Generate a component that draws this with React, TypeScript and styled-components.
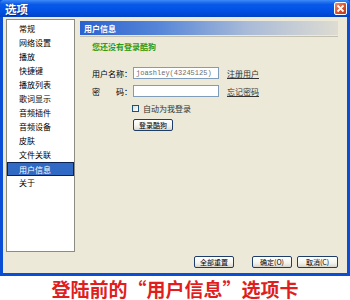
import React from "react";
import styled, { createGlobalStyle } from "styled-components";

const GlobalStyle = createGlobalStyle`
  html, body {
    margin: 0;
    padding: 0;
    background: #ffffff;
  }
  body {
    width: 350px;
    height: 300px;
    overflow: hidden;
    font-family: "Noto Sans CJK SC", "Liberation Sans", sans-serif;
  }
`;

const cjk = `"Noto Sans CJK SC", "Liberation Sans", sans-serif`;

const Window = styled.div`
  width: 350px;
  height: 276px;
  box-sizing: border-box;
  display: flex;
  flex-direction: column;
  background: #ece9d8;
  border: 3px solid #0a4ed6;
  border-top: none;
`;

const TitleBar = styled.div`
  height: 18px;
  margin: 0 -3px;
  padding: 0 3px 0 5px;
  display: flex;
  align-items: center;
  justify-content: space-between;
  background: linear-gradient(#3d8af7 0%, #0a5ae8 25%, #0050e6 65%, #0342c4 100%);
  border-radius: 4px 4px 0 0;
`;

const Title = styled.span`
  font-family: ${cjk};
  font-size: 11.5px;
  font-weight: bold;
  color: #fff;
  text-shadow: 1px 1px 0 #0b2a7a;
`;

const CloseButton = styled.div`
  width: 13px;
  height: 13px;
  box-sizing: border-box;
  border: 1px solid #fff;
  border-radius: 2px;
  background: linear-gradient(135deg, #f08c6c, #d9512c 55%, #b8361a);
  display: flex;
  align-items: center;
  justify-content: center;
`;

const Body = styled.div`
  flex: 1;
  display: flex;
  flex-direction: column;
  padding: 2px 9px 5px 3px;
`;

const Main = styled.div`
  display: flex;
  gap: 5px;
`;

const List = styled.div`
  width: 69px;
  height: 233px;
  box-sizing: border-box;
  background: #fff;
  border: 1px solid #8d8c80;
  padding: 2px 0 0 0;
  display: flex;
  flex-direction: column;
`;

const ListItem = styled.div<{ $selected?: boolean }>`
  height: 14px;
  line-height: 13px;
  padding-left: 11px;
  margin: 0 ${(p) => (p.$selected ? "0" : "1px")};
  font-family: ${cjk};
  font-size: 8px;
  color: ${(p) => (p.$selected ? "#fff" : "#000")};
  background: ${(p) => (p.$selected ? "#316ac5" : "transparent")};
  border: ${(p) => (p.$selected ? "1px solid #0b2152" : "none")};
  box-sizing: border-box;
`;

const Panel = styled.div`
  width: 258px;
  padding-top: 2px;
  display: flex;
  flex-direction: column;
`;

const HeaderWrap = styled.div`
  padding-bottom: 1px;
  border-bottom: 1px solid #c3c0b0;
`;

const Header = styled.div`
  height: 14px;
  padding-left: 4px;
  display: flex;
  align-items: center;
  background: linear-gradient(90deg, #2b62d0 0%, #5585d8 30%, #a9bbd8 65%, #dedcd2 100%);
  font-family: ${cjk};
  font-size: 8px;
  font-weight: bold;
  color: #fff;
`;

const Content = styled.div`
  padding-left: 12px;
  display: flex;
  flex-direction: column;
`;

const Notice = styled.div`
  margin-top: 5px;
  height: 10px;
  line-height: 10px;
  font-family: ${cjk};
  font-size: 8px;
  font-weight: bold;
  color: #2f9b12;
`;

const FieldRow = styled.div<{ $top: number }>`
  margin-top: ${(p) => p.$top}px;
  height: 12px;
  display: flex;
  align-items: center;
`;

const Label = styled.div`
  width: 41px;
  display: flex;
  justify-content: space-between;
  padding-right: 1px;
  box-sizing: border-box;
  font-family: ${cjk};
  font-size: 8px;
  color: #000;
`;

const Input = styled.div`
  width: 86px;
  height: 12px;
  box-sizing: border-box;
  background: #fff;
  border: 1px solid #7f9db9;
  padding-left: 2px;
  font-family: "Liberation Mono", monospace;
  font-size: 7px;
  line-height: 10px;
  color: #6c6c6c;
  white-space: nowrap;
  overflow: hidden;
`;

const Link = styled.span`
  margin-left: 8px;
  font-family: ${cjk};
  font-size: 8px;
  color: #333;
  text-decoration: underline;
`;

const CheckRow = styled.div`
  margin-top: 7px;
  margin-left: 40px;
  height: 9px;
  display: flex;
  align-items: center;
  gap: 4px;
  font-family: ${cjk};
  font-size: 8px;
  color: #333;
`;

const CheckBox = styled.span`
  width: 7px;
  height: 7px;
  box-sizing: border-box;
  border: 1px solid #1c5180;
  background: linear-gradient(135deg, #dcdcd7, #fff);
`;

const Button = styled.div<{ $width?: number }>`
  width: ${(p) => p.$width ?? 40}px;
  height: 12px;
  box-sizing: border-box;
  border: 1px solid #1f3d6a;
  border-radius: 2px;
  background: linear-gradient(#fff, #f3f3ee 60%, #d8d6cb);
  display: flex;
  align-items: center;
  justify-content: center;
  font-family: ${cjk};
  font-size: 7px;
  color: #000;
`;

const LoginButton = styled(Button)`
  margin-top: 6px;
  margin-left: 41px;
`;

const Footer = styled.div`
  margin-top: 4px;
  display: flex;
  justify-content: flex-end;
  gap: 5px;
`;

const Spacer = styled.div`
  width: 8px;
`;

const Caption = styled.div`
  height: 24px;
  display: flex;
  align-items: center;
  justify-content: center;
  font-family: ${cjk};
  font-size: 19px;
  font-weight: bold;
  color: #e01e1e;
`;

const items = [
  "常规",
  "网络设置",
  "播放",
  "快捷键",
  "播放列表",
  "歌词显示",
  "音频插件",
  "音频设备",
  "皮肤",
  "文件关联",
  "用户信息",
  "关于",
];

export default function App() {
  return (
    <>
      <GlobalStyle />
      <Window>
        <TitleBar>
          <Title>选项</Title>
          <CloseButton>
            <svg width="9" height="9" viewBox="0 0 9 9">
              <path d="M1.5 1.5 L7.5 7.5 M7.5 1.5 L1.5 7.5" stroke="#fff" strokeWidth="1.8" />
            </svg>
          </CloseButton>
        </TitleBar>
        <Body>
          <Main>
            <List>
              {items.map((it) => (
                <ListItem key={it} $selected={it === "用户信息"}>
                  {it}
                </ListItem>
              ))}
            </List>
            <Panel>
              <HeaderWrap>
                <Header>用户信息</Header>
              </HeaderWrap>
              <Content>
                <Notice>您还没有登录酷狗</Notice>
                <FieldRow $top={15}>
                  <Label>
                    <span>用户名称：</span>
                  </Label>
                  <Input>joashley(43245125)</Input>
                  <Link>注册用户</Link>
                </FieldRow>
                <FieldRow $top={6}>
                  <Label>
                    <span>密</span>
                    <span>码：</span>
                  </Label>
                  <Input />
                  <Link>忘记密码</Link>
                </FieldRow>
                <CheckRow>
                  <CheckBox />
                  自动为我登录
                </CheckRow>
                <LoginButton>登录酷狗</LoginButton>
              </Content>
            </Panel>
          </Main>
          <Footer>
            <Button>全部重置</Button>
            <Spacer />
            <Button>确定(O)</Button>
            <Button $width={41}>取消(C)</Button>
          </Footer>
        </Body>
      </Window>
      <Caption>登陆前的“用户信息”选项卡</Caption>
    </>
  );
}
